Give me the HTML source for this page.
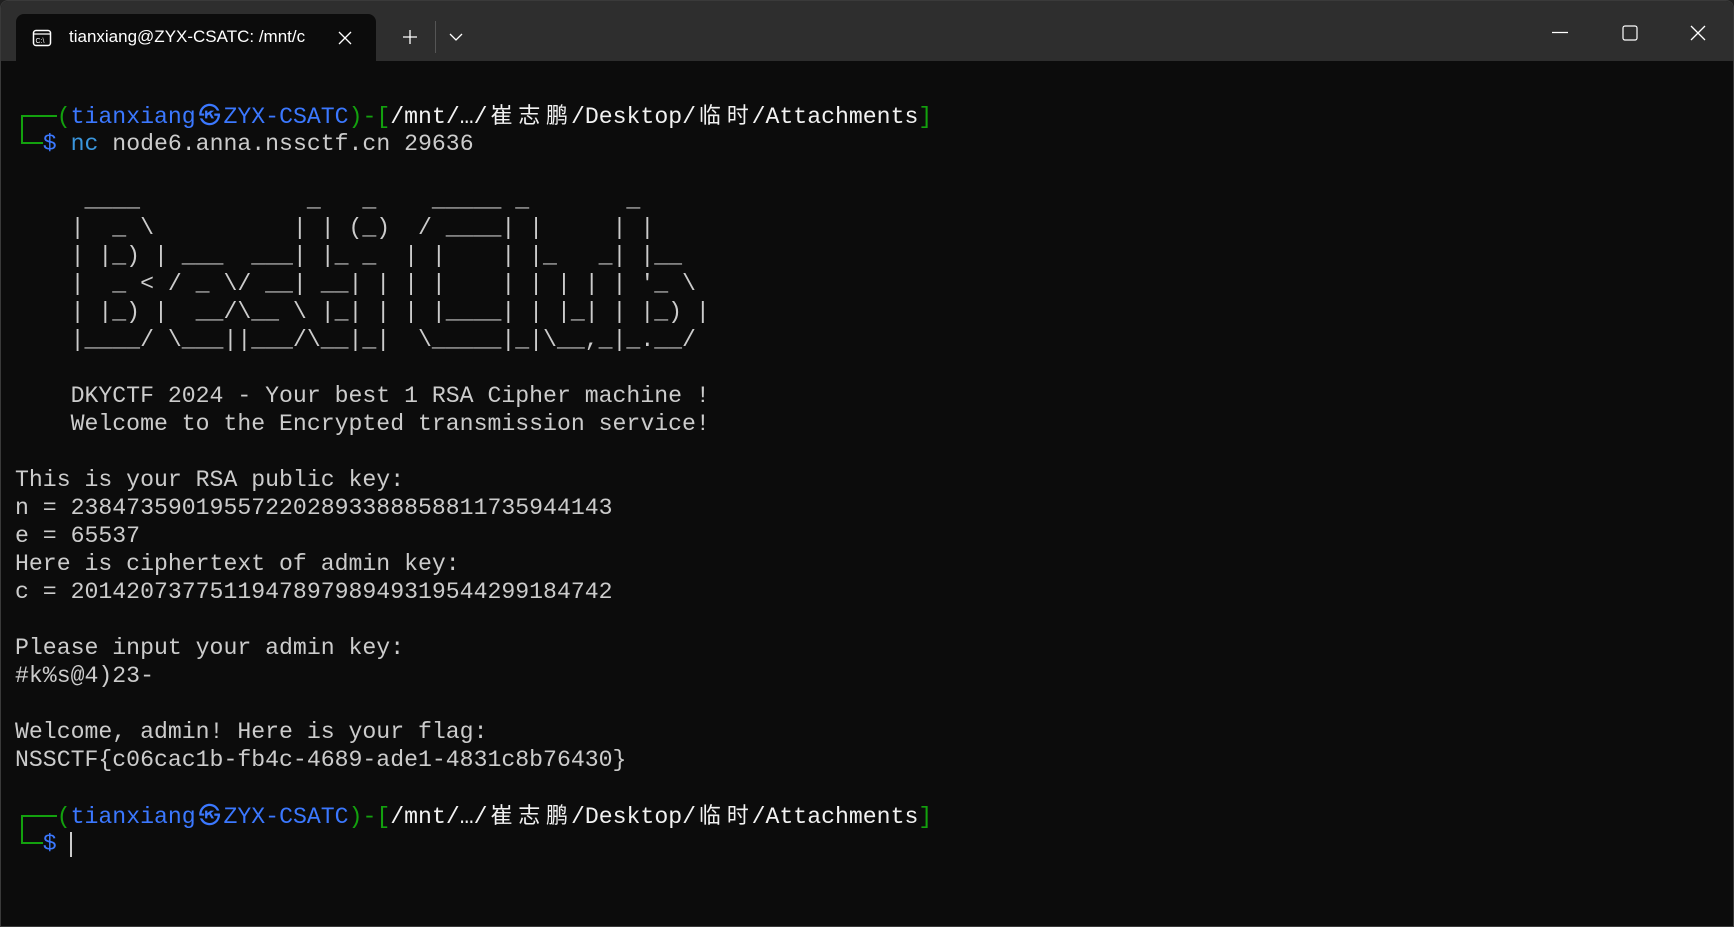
<!DOCTYPE html>
<html><head><meta charset="utf-8"><style>
html,body{margin:0;padding:0;background:#202020;}
body{width:1734px;height:927px;position:relative;overflow:hidden;}
.win{position:absolute;left:0;top:0;width:1732px;height:925px;background:#0c0c0c;border:1px solid #3a3a3a;border-radius:8px 8px 0 0;overflow:hidden;}
.tb{position:absolute;left:0;top:0;width:100%;height:60px;background:#2e2e2e;}
.tab{position:absolute;left:15px;top:13px;width:360px;height:48px;background:#0c0c0c;border-radius:8px 8px 0 0;}
.tabt{position:absolute;left:53px;top:13px;width:262px;overflow:hidden;white-space:nowrap;font:17px "Liberation Sans",sans-serif;color:#fff;}
.term{position:absolute;left:14px;top:0;font-family:"Liberation Mono","DejaVu Sans Mono",monospace;font-size:23.17px;color:#cccccc;}
.r{position:absolute;left:0;height:28px;line-height:28px;white-space:pre;}
.c{display:inline-block;width:27.8px;text-align:center;font-family:"Liberation Sans","Noto Sans CJK SC",sans-serif;font-size:22px;}
.g{color:#13a10e}.b{color:#3b78ff}.w{color:#f2f2f2}.lb{color:#3a96dd}
.gl{position:absolute;background:#13a10e;}
</style></head><body>
<div class="win">
<div class="tb">
 <div class="tab">
  <svg style="position:absolute;left:16px;top:14px" width="20" height="20" viewBox="0 0 20 20"><rect x="1.5" y="2.5" width="17" height="15" rx="2.5" fill="none" stroke="#fff" stroke-width="1.5"/><line x1="1.5" y1="6" x2="18.5" y2="6" stroke="#fff" stroke-width="1.3"/><text x="3.5" y="15" font-family="Liberation Sans" font-size="7" fill="#fff">C:\</text></svg>
  <div class="tabt">tianxiang@ZYX-CSATC: /mnt/c</div>
  <svg style="position:absolute;left:322px;top:17px" width="14" height="14"><path d="M1 1L13 13M13 1L1 13" stroke="#fff" stroke-width="1.3"/></svg>
 </div>
 <svg style="position:absolute;left:401px;top:28px" width="16" height="16"><path d="M8 1V15M1 8H15" stroke="#fff" stroke-width="1.3"/></svg>
 <div style="position:absolute;left:434px;top:20px;width:1px;height:32px;background:#555"></div>
 <svg style="position:absolute;left:448px;top:32px" width="14" height="9"><path d="M1 1L7 7L13 1" stroke="#fff" stroke-width="1.3" fill="none"/></svg>
 <svg style="position:absolute;left:1551px;top:30px" width="16" height="3"><path d="M0 1.5H16" stroke="#fff" stroke-width="1.2"/></svg>
 <svg style="position:absolute;left:1621px;top:24px" width="16" height="16"><rect x="1" y="1" width="14" height="14" rx="2" fill="none" stroke="#fff" stroke-width="1.2"/></svg>
 <svg style="position:absolute;left:1689px;top:24px" width="16" height="16"><path d="M1 1L15 15M15 1L1 15" stroke="#fff" stroke-width="1.3"/></svg>
</div>

<div class="gl" style="left:20px;top:114px;width:2px;height:29px"></div>
<div class="gl" style="left:20px;top:114px;width:36px;height:2px"></div>
<div class="gl" style="left:20px;top:141px;width:22px;height:2px"></div>
<div class="gl" style="left:20px;top:814px;width:2px;height:29px"></div>
<div class="gl" style="left:20px;top:814px;width:36px;height:2px"></div>
<div class="gl" style="left:20px;top:841px;width:22px;height:2px"></div>

<div class="term">
<div class="r" style="top:101px">   <span class="g">(</span><span class="b">tianxiang</span><span class="c b">㉿</span><span class="b">ZYX-CSATC</span><span class="g">)-[</span><span class="w">/mnt/…/<span class="c">崔</span><span class="c">志</span><span class="c">鹏</span>/Desktop/<span class="c">临</span><span class="c">时</span>/Attachments</span><span class="g">]</span></div>
<div class="r" style="top:129px">  <span class="b">$</span> <span class="lb">nc</span> node6.anna.nssctf.cn 29636</div>
<div class="r" style="top:185px">     ____            _   _    _____ _       _</div>
<div class="r" style="top:213px">    |  _ \          | | (_)  / ____| |     | |</div>
<div class="r" style="top:241px">    | |_) | ___  ___| |_ _  | |    | |_   _| |__</div>
<div class="r" style="top:269px">    |  _ &lt; / _ \/ __| __| | | |    | | | | | '_ \</div>
<div class="r" style="top:297px">    | |_) |  __/\__ \ |_| | | |____| | |_| | |_) |</div>
<div class="r" style="top:325px">    |____/ \___||___/\__|_|  \_____|_|\__,_|_.__/</div>
<div class="r" style="top:381px">    DKYCTF 2024 - Your best 1 RSA Cipher machine !</div>
<div class="r" style="top:409px">    Welcome to the Encrypted transmission service!</div>
<div class="r" style="top:465px">This is your RSA public key:</div>
<div class="r" style="top:493px">n = 238473590195572202893388858811735944143</div>
<div class="r" style="top:521px">e = 65537</div>
<div class="r" style="top:549px">Here is ciphertext of admin key:</div>
<div class="r" style="top:577px">c = 201420737751194789798949319544299184742</div>
<div class="r" style="top:633px">Please input your admin key:</div>
<div class="r" style="top:661px">#k%s@4)23-</div>
<div class="r" style="top:717px">Welcome, admin! Here is your flag:</div>
<div class="r" style="top:745px">NSSCTF{c06cac1b-fb4c-4689-ade1-4831c8b76430}</div>
<div class="r" style="top:801px">   <span class="g">(</span><span class="b">tianxiang</span><span class="c b">㉿</span><span class="b">ZYX-CSATC</span><span class="g">)-[</span><span class="w">/mnt/…/<span class="c">崔</span><span class="c">志</span><span class="c">鹏</span>/Desktop/<span class="c">临</span><span class="c">时</span>/Attachments</span><span class="g">]</span></div>
<div class="r" style="top:829px">  <span class="b">$</span> </div>
</div>
<div style="position:absolute;left:69px;top:831px;width:2px;height:25px;background:#cccccc"></div>
</div>
</body></html>
